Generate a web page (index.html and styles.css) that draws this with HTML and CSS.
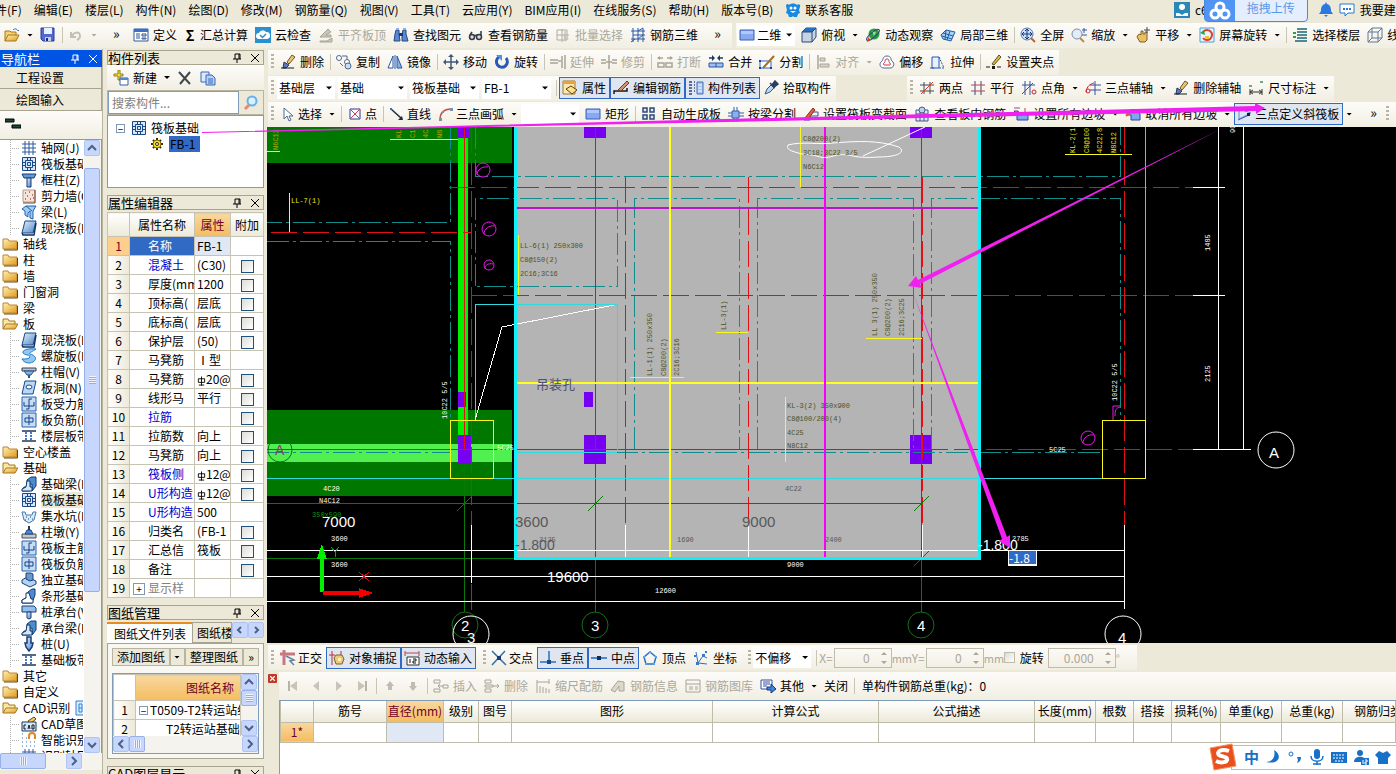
FILE: index.html
```html
<!DOCTYPE html>
<html lang="zh-CN">
<head>
    <meta charset="UTF-8">
    <meta name="viewport" content="width=device-width, initial-scale=1.0">
    <title>绘图输入 - 筏板基础</title>
    <link rel="stylesheet" href="styles.css">
</head>
<body>
    <!-- Icon sprite -->
    <svg class="sprite" aria-hidden="true">
        <defs>
            <linearGradient id="gFolder" x1="0" y1="0" x2="1" y2="1"><stop offset="0" stop-color="#fff3b8"/><stop offset="1" stop-color="#e0981c"/></linearGradient>
            <linearGradient id="gBlue" x1="0" y1="0" x2="1" y2="1"><stop offset="0" stop-color="#e4f2ff"/><stop offset="1" stop-color="#4a80d8"/></linearGradient>
            <linearGradient id="gSlab" x1="0" y1="0" x2="1" y2="1"><stop offset="0" stop-color="#e4f0fc"/><stop offset="1" stop-color="#5088c8"/></linearGradient>
        </defs>
        <symbol id="open" viewBox="0 0 16 16"><path d="M1 14V4h5l1 1h5v3" fill="#f4d070" stroke="#a87818"/><path d="M1 14l3-6h11l-3 6z" fill="url(#gFolder)" stroke="#a87818"/><path d="M9 3c2-2 4-1 5 1l1-1" fill="none" stroke="#3a6ab0"/></symbol>
        <symbol id="save" viewBox="0 0 16 16"><path d="M1 1h13v13H3l-2-2z" fill="#5068d0" stroke="#283c98"/><path d="M4 1h8v6H4z" fill="#e8f0ff"/><path d="M5 10h6v4H5z" fill="#c8d0e8"/><path d="M6 11h2v3H6z" fill="#182878"/></symbol>
        <symbol id="undo" viewBox="0 0 16 16"><path d="M3 5v5h5M4 9c2-4 8-5 8 0 0 2-1 3-3 4" fill="none" stroke="#c4c0b4" stroke-width="2"/></symbol>
        <symbol id="define" viewBox="0 0 16 16"><path d="M1 2h14v12H1z" fill="#fff" stroke="#3058a0"/><path d="M1 2h14v3H1z" fill="#3c70c8"/><path d="M3 7h4M3 9h4M3 11h4" stroke="#3058a0"/><path d="M9 7h4v2H9zM9 11h4v1H9z" fill="#f4e8c0" stroke="#3058a0"/></symbol>
        <symbol id="cloud" viewBox="0 0 16 16"><path d="M0 0h16v16H0z" fill="#2a90d0"/><path d="M4 12a3 3 0 0 1 0-6 4 4 0 0 1 7-1 3.500 3.500 0 0 1 1 7z" fill="#fff"/><path d="M5 8l2.500 2.500L11 7" fill="none" stroke="#2a90d0" stroke-width="1.500"/></symbol>
        <symbol id="level" viewBox="0 0 16 16"><path d="M2 15h12v-4l-5 3H2zM2 10l8-8 3 3-5 3h5v2H2z" fill="#c8c4b8" stroke="#a8a498"/></symbol>
        <symbol id="find" viewBox="0 0 16 16"><path d="M3 3h3v4l1 7H1l1-7zM10 3h3v4l2 7H9V7z" fill="#5c88d0" stroke="#284888"/><path d="M6 6h4v3H6z" fill="#183878"/><path d="M3 1h3v2H3zM10 1h3v2h-3z" fill="#88b0e8"/></symbol>
        <symbol id="glasses" viewBox="0 0 16 16"><circle cx="4" cy="10" r="2.500" fill="#d8dce0" stroke="#303840" stroke-width="1.500"/><circle cx="11" cy="10" r="2.500" fill="#d8dce0" stroke="#303840" stroke-width="1.500"/><path d="M6 9l3-1M2 8l2-3M13 8V4" stroke="#303840" stroke-width="1.500"/></symbol>
        <symbol id="batch" viewBox="0 0 16 16"><path d="M2 3h10v10H2zM2 8h12M7 2v13M10 4v10" fill="none" stroke="#b0aca0"/><path d="M8 7l6 5-3 1-1 2z" fill="#c8c4b8"/></symbol>
        <symbol id="rebar3d" viewBox="0 0 16 16"><path d="M3 1v14M8 1v14M13 1v14M1 4h14M1 12h14M1 15l4-3M3 8h12M8 4l5-3M8 12l5-4" fill="none" stroke="#2858a8"/></symbol>
        <symbol id="rect" viewBox="0 0 16 16"><path d="M1 3h14v10H1z" fill="#88a8f0" stroke="#3860b8"/><path d="M2 4h12v3H2z" fill="#b0c8ff"/></symbol>
        <symbol id="cube" viewBox="0 0 16 16"><path d="M1 5l4-4h10v9l-4 5H1z" fill="#c4d4e4" stroke="#284878"/><path d="M1 5l4-4h10l-4 4z" fill="#2a70c0"/><path d="M1 5h10v10M11 5l4-4" fill="none" stroke="#284878"/></symbol>
        <symbol id="orbit" viewBox="0 0 16 16"><circle cx="9" cy="7" r="5.500" fill="#28a040"/><path d="M7 4l4 1-2 4z" fill="#a0e090"/><ellipse cx="8" cy="8" rx="8" ry="2.500" transform="rotate(-40 8 8)" fill="none" stroke="#284878"/><path d="M2 15l1-5 3 3z" fill="#d04020"/></symbol>
        <symbol id="local3d" viewBox="0 0 16 16"><path d="M1 8l5-5 9 2-4 9-8-2z" fill="#a8d0f0" stroke="#1c60a8"/><path d="M6 3l-1 10M10 4L7 13M3 6l10 3M2 9l10 3" stroke="#1c60a8"/></symbol>
        <symbol id="full" viewBox="0 0 16 16"><circle cx="7" cy="7" r="6" fill="#c8e0ff" stroke="#6078a0"/><path d="M7 2v10M2 7h10M5 4l2-2 2 2M5 10l2 2 2-2M4 5L2 7l2 2M10 5l2 2-2 2" fill="none" stroke="#183878"/><path d="M11 11l4 4" stroke="#b06830" stroke-width="2"/></symbol>
        <symbol id="zoomio" viewBox="0 0 16 16"><circle cx="6" cy="7" r="5" fill="#e0ecf8" stroke="#8090a8"/><path d="M9 11l4 4" stroke="#c08848" stroke-width="2"/><path d="M13 1v5M11 3h5M11 8h5" stroke="#3058a0"/></symbol>
        <symbol id="pan" viewBox="0 0 16 16"><path d="M3 8l2-1 1 1V4h2v3h2V5h2v8l-2 2H5l-3-5z" fill="#e8c068" stroke="#806020"/><path d="M12 0v6M9 3h6" stroke="#404858"/></symbol>
        <symbol id="rotscr" viewBox="0 0 16 16"><path d="M1 1h14v14H1z" fill="#e8f4ff" stroke="#40a0d8"/><path d="M4 5a5 5 0 1 1 0 6" fill="none" stroke="#e04030" stroke-width="2"/><path d="M5 3L1 6l5 2z" fill="#30a040"/><path d="M6 9h4v3H6z" fill="#f0c040"/></symbol>
        <symbol id="floors" viewBox="0 0 16 16"><path d="M5 2h10M5 5h10M5 8h10M5 11h10M3 14h12" stroke="#186878" stroke-width="1.500"/><path d="M1 6h3M1 10h3" stroke="#30a040" stroke-width="2"/></symbol>
        <symbol id="wire" viewBox="0 0 16 16"><path d="M1 5h10v10H1zM5 1h10v10H5zM1 5l4-4M11 5l4-4M11 15l4-4M1 15l4-4" fill="none" stroke="#607898"/></symbol>
        <symbol id="brush" viewBox="0 0 16 16"><path d="M7 8l5-7 3 2-6 7z" fill="#e8c878" stroke="#705020"/><path d="M4 8l5 3-3 3H3z" fill="#5878c0" stroke="#283860"/><path d="M1 14h13" stroke="#181818"/></symbol>
        <symbol id="copy" viewBox="0 0 16 16"><circle cx="3" cy="4" r="2.500" fill="#fff" stroke="#506890"/><circle cx="11" cy="8" r="2.500" fill="#fff" stroke="#506890"/><circle cx="12" cy="12" r="3" fill="#c8dcf8" stroke="#506890"/><path d="M6 2h5v3M4 9l3 3" fill="none" stroke="#506890"/></symbol>
        <symbol id="mirror" viewBox="0 0 16 16"><path d="M6 2v12H1z" fill="#fff" stroke="#2858a8"/><path d="M10 2v12h5z" fill="#88b0e8" stroke="#2858a8"/><path d="M8 1v14" stroke="#2858a8"/></symbol>
        <symbol id="move" viewBox="0 0 16 16"><path d="M8 2v12M2 8h12" stroke="#405878" stroke-width="1.500"/><path d="M8 0l3 3H5zM8 16l3-3H5zM0 8l3-3v6zM16 8l-3-3v6z" fill="#405878"/></symbol>
        <symbol id="rotate" viewBox="0 0 16 16"><path d="M5 3a5.500 5.500 0 1 0 7 1" fill="none" stroke="#2858b8" stroke-width="3"/><path d="M2 1h6v6z" fill="#5090e8"/></symbol>
        <symbol id="extend" viewBox="0 0 16 16"><path d="M0 6h8M0 9h8M8 7h3M12 2v12M15 1v14" stroke="#a8a498" stroke-width="1.500"/></symbol>
        <symbol id="trim" viewBox="0 0 16 16"><path d="M0 6h5M0 9h5M11 6h5M11 9h5M8 1v14M5 8h6" stroke="#a8a498" stroke-width="1.500"/></symbol>
        <symbol id="break" viewBox="0 0 16 16"><path d="M1 4h5M10 4h5M1 9h6v4H1zM9 9h6v4H9z" fill="none" stroke="#a8a498" stroke-width="1.500"/><path d="M3 2L0 4l3 2zM13 2l3 2-3 2z" fill="#a8a498"/></symbol>
        <symbol id="merge" viewBox="0 0 16 16"><path d="M1 4h5M10 4h5" stroke="#203860" stroke-width="1.500"/><path d="M4 1l3 3-3 3zM12 1L9 4l3 3z" fill="#203860"/><path d="M1 9h14v4H1zM8 9v4" fill="#a0c0f0" stroke="#2858a8"/></symbol>
        <symbol id="split" viewBox="0 0 16 16"><path d="M1 7h11v7H1z" fill="#fff" stroke="#3060c8"/><path d="M4 14L15 2" stroke="#a07020" stroke-width="2"/><path d="M0 6h2v2H0zM0 13h2v2H0zM11 13h2v2h-2z" fill="#1840a0"/></symbol>
        <symbol id="align" viewBox="0 0 16 16"><path d="M3 1v14" stroke="#a8a498" stroke-width="1.500"/><path d="M5 4h5v3H5zM5 10h9v3H5z" fill="#d8d4c8" stroke="#a8a498"/></symbol>
        <symbol id="offset" viewBox="0 0 16 16"><path d="M8 2c5 0 3 4 6 6 2 3 0 6-3 6H5c-4 0-5-4-3-6 3-2 1-6 6-6z" fill="#fff" stroke="#506890"/><path d="M8 5c3 0 1 3 3 4 1 2 0 2-1 2H6c-2 0-2-1-1-2 2-1 0-4 3-4z" fill="none" stroke="#d03040"/></symbol>
        <symbol id="stretch" viewBox="0 0 16 16"><path d="M2 3h7v11H2z" fill="#e8f0fc" stroke="#2858a8"/><path d="M9 3l5 11H9" fill="none" stroke="#2858a8" stroke-dasharray="2 1"/><path d="M0 14h4" stroke="#2858a8"/></symbol>
        <symbol id="grip" viewBox="0 0 16 16"><path d="M6 10l7-9 2 2-7 8z" fill="#d8b848" stroke="#605020"/><path d="M0 13h4M11 13h4" stroke="#181818"/><path d="M6 12h3v3H6z" fill="#181818"/></symbol>
        <symbol id="props" viewBox="0 0 16 16"><path d="M1 1h12v13H1z" fill="#f8e8b8" stroke="#a07828"/><path d="M1 1h12v3H1z" fill="#f0a030"/><path d="M4 9l5-3 6 4-5 4z" fill="#ffe088" stroke="#604010"/></symbol>
        <symbol id="editbar" viewBox="0 0 16 16"><path d="M1 14v-3h13v-3" fill="none" stroke="#181818" stroke-width="1.500"/><path d="M5 10l9-9 2 2-8 8z" fill="#d89068" stroke="#604028"/></symbol>
        <symbol id="list" viewBox="0 0 16 16"><path d="M1 2h3M1 5h3M1 8h3M1 11h3M1 14h3M6 2h1M6 5h1M6 8h1M6 11h1" stroke="#304878" stroke-width="1.500"/><path d="M9 2h6v12H9z" fill="#a8c4f0" stroke="#4870b8"/><path d="M10 5h4M10 8h4M10 11h4" stroke="#fff"/></symbol>
        <symbol id="pick" viewBox="0 0 16 16"><path d="M2 14l2-5 4-4 3 3-4 4z" fill="#b8d8f8" stroke="#305880"/><path d="M7 3l5 5M9 5l3-4 3 3-4 3z" fill="#284060" stroke="#284060" stroke-width="1.500"/></symbol>
        <symbol id="axis2" viewBox="0 0 16 16"><path d="M5 2v12M11 2v12M1 5h14M1 11h14" stroke="#404858"/><path d="M2 14L14 2" stroke="#d04020"/></symbol>
        <symbol id="axisp" viewBox="0 0 16 16"><path d="M5 1v14M11 1v14" stroke="#384878"/><path d="M1 5h14M1 11h14" stroke="#c04050"/></symbol>
        <symbol id="axisa" viewBox="0 0 16 16"><path d="M4 1v14M9 1v14M1 5h13" stroke="#3850a0"/><path d="M1 14L12 3" stroke="#d02030"/><circle cx="13" cy="12" r="2" fill="none" stroke="#d02030"/></symbol>
        <symbol id="axisc" viewBox="0 0 16 16"><path d="M10 1v14M5 5h11M5 10h11" stroke="#3850a0"/><path d="M1 12c1-6 4-8 8-9" fill="none" stroke="#d02030"/><circle cx="3" cy="11" r="2" fill="none" stroke="#d02030"/></symbol>
        <symbol id="dim" viewBox="0 0 16 16"><path d="M2 9v6M14 9v6M2 12h12M5 10l-3 2 3 2M11 10l3 2-3 2" fill="none" stroke="#303030"/><path d="M1 5h3v2H1zM12 1h3v2h-3z" fill="#70a880"/></symbol>
        <symbol id="select" viewBox="0 0 16 16"><path d="M4 2v11l3-3 2 5 2-1-2-4h4z" fill="#fff" stroke="#506890"/></symbol>
        <symbol id="point" viewBox="0 0 16 16"><path d="M3 3h10v10H3z" fill="#fff" stroke="#283890"/><path d="M4 4l8 8M12 4l-8 8" stroke="#d04050"/></symbol>
        <symbol id="line" viewBox="0 0 16 16"><path d="M2 3l10 9" stroke="#202840" stroke-width="1.500"/><path d="M14 14H9l4-4z" fill="#202840"/><path d="M1 2h2v2H1z" fill="#3070d0"/></symbol>
        <symbol id="arc" viewBox="0 0 16 16"><path d="M2 14C2 7 6 3 13 3" fill="none" stroke="#d05048" stroke-width="1.500"/><path d="M12 2h3v3h-3zM1 12h3v3H1zM4 5h2v2H4z" fill="#8090a8"/></symbol>
        <symbol id="auto" viewBox="0 0 16 16"><path d="M2 2h4v4H2zM9 2h4v4H9zM2 9h4v4H2zM9 9h4v4H9z" fill="#dce8fc" stroke="#304878" stroke-width="1.500"/></symbol>
        <symbol id="bybeam" viewBox="0 0 16 16"><path d="M0 7h16M0 10h16M6 1v4M9 1v4M6 12v4M9 12v4" stroke="#3060b0"/><path d="M4 5h7v7H4z" fill="#88b0f0" stroke="#3060b0"/></symbol>
        <symbol id="section" viewBox="0 0 16 16"><path d="M1 14h6v-4h8V6H9" fill="none" stroke="#3850a0"/><path d="M2 12l8-10 2 2-7 9z" fill="#e06048" stroke="#902818"/></symbol>
        <symbol id="view" viewBox="0 0 16 16"><path d="M2 4h12v11H2zM2 8h12M6 4v11M10 4v11" fill="#e0e8f8" stroke="#405890"/><circle cx="8" cy="4" r="3" fill="#b8d0f0" stroke="#506080"/></symbol>
        <symbol id="slope" viewBox="0 0 16 16"><path d="M1 5h4l2 3h8v6H4V8z" fill="#80a8f0" stroke="#2848a0"/><path d="M1 2h6M12 2v4" stroke="#c04050"/></symbol>
        <symbol id="unslope" viewBox="0 0 16 16"><path d="M5 4h7l3 4v6H6V9H1z" fill="#80a8f0" stroke="#2848a0"/><path d="M1 10l4-4" stroke="#e06020" stroke-width="2"/></symbol>
        <symbol id="tri" viewBox="0 0 16 16"><path d="M2 13V3l12 4z" fill="#d8e4fc" stroke="#7088c8"/><path d="M1 14l11-5" stroke="#3060c0"/><path d="M10 7h3v3h-3z" fill="#182040"/></symbol>
        <symbol id="new" viewBox="0 0 16 16"><path d="M5 0h2v4h3v2H7v4H5V6H1V4h4z" fill="#f8d840" stroke="#908020"/><path d="M7 8h8v7H7z" fill="#fff" stroke="#3060b0"/><path d="M7 8h8v2H7z" fill="#5088d8"/></symbol>
        <symbol id="cross" viewBox="0 0 16 16"><path d="M2 2l11 12M13 2L3 14" stroke="#404850" stroke-width="2"/></symbol>
        <symbol id="docs" viewBox="0 0 16 16"><path d="M1 2h8v10H1z" fill="#dce8fc" stroke="#3868b8"/><path d="M6 5h6l3 3v7H6z" fill="#b8d0f8" stroke="#3868b8"/><path d="M8 9h5M8 11h5M8 13h5" stroke="#3868b8"/></symbol>
        <symbol id="search" viewBox="0 0 16 16"><circle cx="9" cy="6" r="4.500" fill="#d8f0ff" stroke="#68b0e8" stroke-width="2"/><path d="M6 10l-4 4" stroke="#e88870" stroke-width="3"/></symbol>
        <symbol id="gear" viewBox="0 0 16 16"><path d="M8 2v12M2 8h12M4 4l8 8M12 4l-8 8" stroke="#302800" stroke-width="2"/><circle cx="8" cy="8" r="4" fill="#f8e020" stroke="#806c00"/><circle cx="8" cy="8" r="1.500" fill="#fff" stroke="#302800"/></symbol>
        <symbol id="folder" viewBox="0 0 16 16"><path d="M1 13V3h5l1 2h8v8z" fill="url(#gFolder)" stroke="#b88830"/><path d="M2 14h13.500V6" fill="none" stroke="#604410"/></symbol>
        <symbol id="folderopen" viewBox="0 0 16 16"><path d="M1 13V3h5l1 2h6v3" fill="#f8e8a8" stroke="#a87820"/><path d="M1 13l3-5h12l-3 5z" fill="url(#gFolder)" stroke="#a87820"/></symbol>
        <symbol id="axis" viewBox="0 0 16 16"><path d="M4 1v14M8 1v14M12 1v14M1 4h14M1 8h14M1 12h14" stroke="#2a5ca0"/></symbol>
        <symbol id="raft" viewBox="0 0 16 16"><path d="M1.500 1.500h13v13h-13zM4.500 4.500h7v7h-7z" fill="#d8e8fc" stroke="#184888"/><path d="M6.500 1v3M9.500 1v3M6.500 12v3M9.500 12v3M1 6.500h3M1 9.500h3M12 6.500h3M12 9.500h3M6.500 6.500h3v3h-3z" fill="none" stroke="#184888"/></symbol>
        <symbol id="column" viewBox="0 0 16 16"><path d="M1 2h14l-2 4H3z" fill="#6098d8" stroke="#183c70"/><path d="M6 6h4v9H6z" fill="url(#gBlue)" stroke="#183c70"/></symbol>
        <symbol id="wall" viewBox="0 0 16 16"><path d="M2 2h12v12H2z" fill="#f4e4dc" stroke="#b89888"/><path d="M4 5h1M8 4h1M6 8h1M11 7h1M4 11h1M9 11h1M12 10h1" stroke="#c04828" stroke-width="1.500"/><path d="M14 2v13H2" fill="none" stroke="#684838"/></symbol>
        <symbol id="beam" viewBox="0 0 16 16"><path d="M1 5l4-3h10l-3 5v8l-3-1V7L7 9v4l-3-2V7z" fill="#a0ccf4" stroke="#2060a8"/><path d="M5 2l6 5" stroke="#2060a8"/></symbol>
        <symbol id="slab" viewBox="0 0 16 16"><path d="M4 1h11l-3 12H1z" fill="url(#gSlab)" stroke="#184888"/><path d="M1 13l1 2h11l2-12" fill="none" stroke="#103060" stroke-width="1.500"/></symbol>
        <symbol id="spiral" viewBox="0 0 16 16"><path d="M15 1C7 0 1 2 2 5c1 2 8 2 7 4-1 2-4 2-8 2 2 4 7 5 11 3 5-3 2-7-3-8-2-1 2-2 6-5z" fill="#90c8f4" stroke="#2878c0"/></symbol>
        <symbol id="cap" viewBox="0 0 16 16"><path d="M1 4h14v3H1z" fill="#b8c4d0" stroke="#304058"/><path d="M3 7h10l-3 4H6z" fill="#80b0e8" stroke="#305080"/><path d="M7 11h2v3H7z" fill="#305080"/></symbol>
        <symbol id="hole" viewBox="0 0 16 16"><path d="M4 1h11l-3 13H1z" fill="#b8d8f8" stroke="#184888"/><ellipse cx="8" cy="7" rx="3" ry="2" fill="#fff" stroke="#184888"/></symbol>
        <symbol id="barmain" viewBox="0 0 16 16"><path d="M1 1h14v14H1z" fill="#c4dcf8" stroke="#2860a8"/><path d="M3 6v4h10V6M8 3v10M8 3h3M8 13H5" fill="none" stroke="#184080"/></symbol>
        <symbol id="barneg" viewBox="0 0 16 16"><path d="M1 1h14v14H1z" fill="#c4dcf8" stroke="#2860a8"/><path d="M4 6h8M4 6v4M12 6v4M4 10h8M8 3v10" fill="none" stroke="#184080"/></symbol>
        <symbol id="strip" viewBox="0 0 16 16"><path d="M1 3h14M1 13h14" stroke="#203858" stroke-width="1.500"/><path d="M5 4v9M10 4v9" stroke="#4878c0" stroke-width="2" stroke-dasharray="2 1"/></symbol>
        <symbol id="fbeam" viewBox="0 0 16 16"><path d="M6 4l4-3h5v9l-4 5V8H9v7H1l2-4h3z" fill="#4c8cd0" stroke="#143868"/><path d="M6 5h3v6h2v4H1v-2l4-2z" fill="#d0e8fc" stroke="#143868"/></symbol>
        <symbol id="pit" viewBox="0 0 16 16"><path d="M1 4h3l1 3h6l1-3h3l-2 8-5 3-5-3z" fill="#d8ecfc" stroke="#4878a8"/><path d="M5 9h1M9 9h1M7 11h1M4 12h1M11 11h1" stroke="#184888"/></symbol>
        <symbol id="pier" viewBox="0 0 16 16"><path d="M1 10h14v4H1z" fill="#c4c8cc" stroke="#484c58"/><path d="M4 10l2-4h4l2 4z" fill="#4888d8" stroke="#204880"/><path d="M7 2h2v4H7z" fill="#303848"/></symbol>
        <symbol id="iso" viewBox="0 0 16 16"><path d="M1 8l5-3 9 4v3l-6 3-8-4z" fill="#b0d4f4" stroke="#204070"/><path d="M5 1h5l2 1v6l-3 1-4-2z" fill="#6898d0" stroke="#204070"/></symbol>
        <symbol id="footing" viewBox="0 0 16 16"><path d="M1 15v-3l4-2 2-6 4-3h3v6l-3 8z" fill="#4c8cd0" stroke="#143868"/><path d="M1 15v-3l4-2V5h3l2 6h2v4z" fill="#fff" stroke="#143868"/></symbol>
        <symbol id="pilecap" viewBox="0 0 16 16"><path d="M1 2h12l2 2v4H1z" fill="#90c0f0" stroke="#184070"/><path d="M6 8h4v6l-2 1-2-1z" fill="url(#gBlue)" stroke="#184070"/></symbol>
        <symbol id="pile" viewBox="0 0 16 16"><path d="M6 1h4v6h2l-1 4-3 4-3-4-1-4h2z" fill="url(#gBlue)" stroke="#183c70" stroke-width="1.500"/></symbol>
        <symbol id="cad" viewBox="0 0 16 16"><path d="M7 5l6-4 2 2-6 5z" fill="#f0d060" stroke="#604010"/><path d="M1 6h14v9H1z" fill="#d8e8f8" stroke="#183860"/><path d="M5 9H3v4h2M7 13l1-4 1 4M11 9v4h2V9z" fill="none" stroke="#101828"/></symbol>
        <symbol id="smart" viewBox="0 0 16 16"><path d="M1 2h1M1 6h1M5 6h1M1 10h1M5 10h1M9 10h1M13 10h1M1 14h1M5 14h1M9 14h1M13 14h1" stroke="#3868b0"/><path d="M8 7V4a3 3 0 0 1 6 0v3" fill="none" stroke="#e08828" stroke-width="2"/></symbol>
        <symbol id="grid2" viewBox="0 0 16 16"><path d="M1 1h14v14H1z" fill="#d8ecff" stroke="#3080d0"/><path d="M4 4h3v8H4zM9 4h3v8H9zM4 8h3M9 8h3" fill="none" stroke="#3080d0"/></symbol>
        <symbol id="ortho" viewBox="0 0 16 16"><path d="M4 0v15M0 4h15" stroke="#c87880" stroke-width="3"/><path d="M6 6l8 4-4 1 4 4" fill="none" stroke="#6080a0" stroke-width="1.500"/></symbol>
        <symbol id="snap" viewBox="0 0 16 16"><path d="M3 1v14M0 5h6M12 1v6" stroke="#b03040"/><path d="M5 8l2-3h6l2 4-2 5H7z" fill="#f0c878" stroke="#806020"/><path d="M9 8h3v3H9z" fill="#fff8c0"/></symbol>
        <symbol id="dyn" viewBox="0 0 16 16"><path d="M1 1v5M15 1v5M1 3h14" stroke="#c04050"/><path d="M3 7h12v8H3z" fill="#fff" stroke="#303030"/><path d="M6 9v4M9 9h3v2H9v2h3" fill="none" stroke="#101010"/></symbol>
        <symbol id="isect" viewBox="0 0 16 16"><path d="M1 1l14 14M14 1L1 15" stroke="#3070b0" stroke-width="1.500"/><path d="M6 6h4v4H6z" fill="#183c70"/></symbol>
        <symbol id="perp" viewBox="0 0 16 16"><path d="M9 1v11M0 12h16" stroke="#2870c0" stroke-width="1.500"/><path d="M7 10h4v4H7z" fill="#184888"/></symbol>
        <symbol id="mid" viewBox="0 0 16 16"><path d="M0 8h16" stroke="#4888d8" stroke-width="2"/><path d="M6 6h4v4H6z" fill="#102c58"/></symbol>
        <symbol id="vertex" viewBox="0 0 16 16"><path d="M8 2l6 5-2 7H4L2 7z" fill="none" stroke="#2870c0" stroke-width="1.500"/><path d="M7 1h2v2H7zM1 6h2v2H1zM13 6h2v2h-2zM3 13h2v2H3zM11 13h2v2h-2z" fill="#58a0e8"/></symbol>
        <symbol id="coord" viewBox="0 0 16 16"><path d="M3 2l2 11 9 1M5 13l5-7 4 2" fill="none" stroke="#2870c0"/><path d="M9 4h3v3H9zM1 5h2v2H1zM12 1h2v2h-2zM3 12h3v3H3z" fill="#3878c8"/></symbol>
        <symbol id="first" viewBox="0 0 16 16"><path d="M4 3v10" stroke="#b8b4a8" stroke-width="2"/><path d="M12 3v10L5 8z" fill="#c8c4b8"/></symbol>
        <symbol id="prev" viewBox="0 0 16 16"><path d="M11 3v10L5 8z" fill="#c8c4b8"/></symbol>
        <symbol id="next" viewBox="0 0 16 16"><path d="M5 3v10l6-5z" fill="#c8c4b8"/></symbol>
        <symbol id="last" viewBox="0 0 16 16"><path d="M4 3v10l7-5z" fill="#c8c4b8"/><path d="M12 3v10" stroke="#b8b4a8" stroke-width="2"/></symbol>
        <symbol id="up" viewBox="0 0 16 16"><path d="M8 3l4 5h-2v4H6V8H4z" fill="#c0bcb0"/></symbol>
        <symbol id="down" viewBox="0 0 16 16"><path d="M8 13l4-5h-2V4H6v4H4z" fill="#c0bcb0"/></symbol>
        <symbol id="insert" viewBox="0 0 16 16"><path d="M1 2h6v3H1zM1 11h6v3H1zM10 7h5v3h-5zM5 8h5M7 6L5 8l2 2" fill="none" stroke="#a8a498"/></symbol>
        <symbol id="remove" viewBox="0 0 16 16"><path d="M1 2h6v3H1zM1 11h6v3H1zM1 7h8v2H1zM9 8h6M13 6l2 2-2 2" fill="none" stroke="#a8a498"/></symbol>
        <symbol id="scale" viewBox="0 0 16 16"><path d="M2 2v13M2 4h12M14 1v5M5 8v7M8 9v6M11 10v5M14 11v4" stroke="#a8a498"/></symbol>
        <symbol id="info" viewBox="0 0 16 16"><path d="M1 12l7-9 6 1v9H9V8l-4 6z" fill="#dcd8cc" stroke="#a8a498"/></symbol>
        <symbol id="lib" viewBox="0 0 16 16"><path d="M1 2h14v12H1zM1 6h14M4 9h4M4 11h4M10 9h3M10 11h3" fill="none" stroke="#a8a498"/></symbol>
        <symbol id="other" viewBox="0 0 16 16"><path d="M1 2h11v9H1z" fill="#fff" stroke="#3050a0"/><path d="M3 4h7M3 6h7M3 8h4" stroke="#3050a0"/><path d="M7 9h4V6l5 5-5 4v-3H7z" fill="#4080e0" stroke="#183878"/></symbol>
        <symbol id="pin" viewBox="0 0 12 12"><path d="M4 2h5v5M4 2v5M2 7h8M6 7v4M8 2v5" fill="none" stroke="currentColor"/></symbol>
        <symbol id="close" viewBox="0 0 12 12"><path d="M2 2l8 8M10 2l-8 8" stroke="currentColor"/></symbol>
        <symbol id="steel" viewBox="0 0 10 12"><path d="M1.500 3.500h7v4h-7zM5 1v10M2 10.500h6" fill="none" stroke="#000"/></symbol>
        <symbol id="chatbot" viewBox="0 0 16 16"><path d="M1 4c0-2 2-3 3-1 2-2 6-2 8 0 2-2 4 0 3 2l-1 3 1 3-2 1-1 3H9l-1-1-1 1H4l-1-3-2-1 1-3z" fill="#1888e0"/><circle cx="6" cy="6" r="1.500" fill="#fff"/><circle cx="10" cy="6" r="1.500" fill="#fff"/><path d="M5 9h6l-3 2z" fill="#fff"/></symbol>
    </svg>

    <!-- Menu -->
    <header class="menubar">
        <nav class="menu">
            <a href="#">文件(F)</a><a href="#">编辑(E)</a><a href="#">楼层(L)</a><a href="#">构件(N)</a><a href="#">绘图(D)</a><a href="#">修改(M)</a><a href="#">钢筋量(Q)</a><a href="#">视图(V)</a><a href="#">工具(T)</a><a href="#">云应用(Y)</a><a href="#">BIM应用(I)</a><a href="#">在线服务(S)</a><a href="#">帮助(H)</a><a href="#">版本号(B)</a><a href="#"><svg class="ic"><use href="#chatbot"/></svg>联系客服</a>
        </nav>
        <div class="account">
            <svg class="ic" viewBox="0 0 16 16"><path d="M0 0h16v16H0z" fill="#2a88b8"/><circle cx="8" cy="5" r="3" fill="#fff"/><path d="M2 14v-3h3l3 2 3-2h3v3z" fill="#fff"/></svg>
            <span>c6</span>
            <button class="upload">
                <span class="upload-logo"><svg viewBox="0 0 22 20"><g fill="none" stroke="#fff" stroke-width="3"><circle cx="11" cy="6" r="4"/><circle cx="6" cy="13" r="4"/><circle cx="16" cy="13" r="4"/></g></svg></span>
                <span class="upload-text">拖拽上传</span>
            </button>
            <svg class="ic bell" viewBox="0 0 16 16"><path d="M8 0l1 2c4 1 4 5 4 7l2 3H1l2-3c0-2 0-6 4-7zM6 13h4l-2 2z" fill="#2a78e0"/></svg>
            <svg class="ic" viewBox="0 0 16 16"><path d="M1 2h14v9H9l-3 3v-3H1z" fill="#fff" stroke="#2878c8"/><path d="M4 7h2M7 7h2M10 7h2" stroke="#2878c8" stroke-width="2"/></svg>
            <a href="#">我要建议</a>
        </div>
    </header>

    <div class="toolbar main-bar">
        <div class="strip">
            <button title="打开"><svg class="ic"><use href="#open"/></svg></button><i class="dd"></i>
            <button title="保存"><svg class="ic"><use href="#save"/></svg></button><i class="sep"></i>
            <button title="撤销" disabled><svg class="ic"><use href="#undo"/></svg></button><i class="dd off"></i>
            <span class="more">»</span>
            <button><svg class="ic"><use href="#define"/></svg>定义</button>
            <button><b class="sigma">Σ</b>汇总计算</button>
            <button><svg class="ic"><use href="#cloud"/></svg>云检查</button>
            <button disabled><svg class="ic"><use href="#level"/></svg>平齐板顶</button>
            <button><svg class="ic"><use href="#find"/></svg>查找图元</button>
            <button><svg class="ic"><use href="#glasses"/></svg>查看钢筋量</button>
            <button disabled><svg class="ic"><use href="#batch"/></svg>批量选择</button>
            <button><svg class="ic"><use href="#rebar3d"/></svg>钢筋三维</button>
            <span class="more">»</span>
        </div>
        <div class="strip wide">
            <label class="combo w60"><svg class="ic"><use href="#rect"/></svg><select aria-label="视图"><option>二维</option></select></label>
            <button><svg class="ic"><use href="#cube"/></svg>俯视</button><i class="dd"></i>
            <button><svg class="ic"><use href="#orbit"/></svg>动态观察</button>
            <button><svg class="ic"><use href="#local3d"/></svg>局部三维</button><i class="sep"></i>
            <button><svg class="ic"><use href="#full"/></svg>全屏</button>
            <button><svg class="ic"><use href="#zoomio"/></svg>缩放</button><i class="dd"></i>
            <button><svg class="ic"><use href="#pan"/></svg>平移</button><i class="dd"></i>
            <button><svg class="ic"><use href="#rotscr"/></svg>屏幕旋转</button><i class="dd"></i><i class="sep"></i>
            <button><svg class="ic"><use href="#floors"/></svg>选择楼层</button>
            <button><svg class="ic"><use href="#wire"/></svg>线框</button>
        </div>
    </div>

    <div class="workspace">
        <!-- Navigation -->
        <aside class="nav">
            <h2 class="title active">导航栏<span class="grow"></span><svg class="tool"><use href="#pin"/></svg><svg class="tool"><use href="#close"/></svg></h2>
            <button class="nav-tab">工程设置</button>
            <button class="nav-tab">绘图输入</button>
            <div class="nav-tools"><svg class="ic" viewBox="0 0 16 16"><path d="M0 3h9v3H0zM7 9h9v3H7z" fill="#184838" stroke="#000"/></svg></div>
            <div class="nav-body">
                <ul class="tree">
                    <li class="leaf"><svg class="ic"><use href="#axis"/></svg>轴网(J)</li>
                    <li class="leaf"><svg class="ic"><use href="#raft"/></svg>筏板基础</li>
                    <li class="leaf"><svg class="ic"><use href="#column"/></svg>框柱(Z)</li>
                    <li class="leaf"><svg class="ic"><use href="#wall"/></svg>剪力墙(Q)</li>
                    <li class="leaf"><svg class="ic"><use href="#beam"/></svg>梁(L)</li>
                    <li class="leaf"><svg class="ic"><use href="#slab"/></svg>现浇板(B)</li>
                    <li><svg class="ic"><use href="#folder"/></svg>轴线</li>
                    <li><svg class="ic"><use href="#folder"/></svg>柱</li>
                    <li><svg class="ic"><use href="#folder"/></svg>墙</li>
                    <li><svg class="ic"><use href="#folder"/></svg>门窗洞</li>
                    <li><svg class="ic"><use href="#folder"/></svg>梁</li>
                    <li><svg class="ic"><use href="#folderopen"/></svg>板</li>
                    <li class="leaf"><svg class="ic"><use href="#slab"/></svg>现浇板(B)</li>
                    <li class="leaf"><svg class="ic"><use href="#spiral"/></svg>螺旋板(B)</li>
                    <li class="leaf"><svg class="ic"><use href="#cap"/></svg>柱帽(V)</li>
                    <li class="leaf"><svg class="ic"><use href="#hole"/></svg>板洞(N)</li>
                    <li class="leaf"><svg class="ic"><use href="#barmain"/></svg>板受力筋</li>
                    <li class="leaf"><svg class="ic"><use href="#barneg"/></svg>板负筋(F)</li>
                    <li class="leaf"><svg class="ic"><use href="#strip"/></svg>楼层板带</li>
                    <li><svg class="ic"><use href="#folder"/></svg>空心楼盖</li>
                    <li><svg class="ic"><use href="#folderopen"/></svg>基础</li>
                    <li class="leaf"><svg class="ic"><use href="#fbeam"/></svg>基础梁(F)</li>
                    <li class="leaf"><svg class="ic"><use href="#raft"/></svg><span class="current">筏板基础</span></li>
                    <li class="leaf"><svg class="ic"><use href="#pit"/></svg>集水坑(K)</li>
                    <li class="leaf"><svg class="ic"><use href="#pier"/></svg>柱墩(Y)</li>
                    <li class="leaf"><svg class="ic"><use href="#barmain"/></svg>筏板主筋</li>
                    <li class="leaf"><svg class="ic"><use href="#barneg"/></svg>筏板负筋</li>
                    <li class="leaf"><svg class="ic"><use href="#iso"/></svg>独立基础</li>
                    <li class="leaf"><svg class="ic"><use href="#footing"/></svg>条形基础</li>
                    <li class="leaf"><svg class="ic"><use href="#pilecap"/></svg>桩承台(V)</li>
                    <li class="leaf"><svg class="ic"><use href="#fbeam"/></svg>承台梁(F)</li>
                    <li class="leaf"><svg class="ic"><use href="#pile"/></svg>桩(U)</li>
                    <li class="leaf"><svg class="ic"><use href="#strip"/></svg>基础板带</li>
                    <li><svg class="ic"><use href="#folder"/></svg>其它</li>
                    <li><svg class="ic"><use href="#folder"/></svg>自定义</li>
                    <li><svg class="ic"><use href="#folderopen"/></svg>CAD识别<svg class="ic"><use href="#grid2"/></svg></li>
                    <li class="leaf"><svg class="ic"><use href="#cad"/></svg>CAD草图</li>
                    <li class="leaf"><svg class="ic"><use href="#smart"/></svg>智能识别</li>
                    <li class="leaf"><svg class="ic"><use href="#axis"/></svg>识别轴网</li>
                </ul>
                <div class="vscroll">
                    <button class="sb" aria-label="向上"><svg viewBox="0 0 10 10"><path d="M1 7l4-4 4 4"/></svg></button>
                    <div class="thumb nav-thumb"><span class="ridges"></span></div>
                    <span class="grow"></span>
                    <button class="sb" aria-label="向下"><svg viewBox="0 0 10 10"><path d="M1 3l4 4 4-4"/></svg></button>
                </div>
            </div>
            <div class="hscroll">
                <div class="thumb nav-hthumb"><span class="ridges side"></span></div>
                <span class="grow"></span>
                <button class="sb" aria-label="向右"><svg viewBox="0 0 10 10"><path d="M3 1l4 4-4 4"/></svg></button>
            </div>
        </aside>

        <!-- Component list, properties, drawings -->
        <aside class="docks">
            <section class="dock">
                <h2 class="title">构件列表<span class="grow"></span><svg class="tool"><use href="#pin"/></svg><svg class="tool"><use href="#close"/></svg></h2>
                <div class="strip dock-tools">
                    <button><svg class="ic"><use href="#new"/></svg>新建</button><i class="dd"></i>
                    <button title="删除"><svg class="ic"><use href="#cross"/></svg></button>
                    <button title="复制"><svg class="ic"><use href="#docs"/></svg></button>
                </div>
                <div class="search">
                    <input type="text" placeholder="搜索构件..." aria-label="搜索构件">
                    <button title="搜索"><svg class="ic"><use href="#search"/></svg></button>
                </div>
                <ul class="parts">
                    <li><span class="fold">−</span><svg class="ic"><use href="#raft"/></svg>筏板基础</li>
                    <li class="child"><svg class="ic"><use href="#gear"/></svg><span class="picked">FB-1</span></li>
                </ul>
            </section>

            <section class="dock">
                <h2 class="title">属性编辑器<span class="grow"></span><svg class="tool"><use href="#pin"/></svg><svg class="tool"><use href="#close"/></svg></h2>
                <table class="props">
                    <colgroup><col class="c-no"><col class="c-name"><col class="c-val"><col></colgroup>
                    <thead><tr><th></th><th>属性名称</th><th class="hot">属性</th><th>附加</th></tr></thead>
                    <tbody>
                        <tr class="on"><th>1</th><td>名称</td><td>FB-1</td><td></td></tr>
                        <tr class="blue"><th>2</th><td>混凝土</td><td>(C30)</td><td><input type="checkbox" aria-label="混凝土"></td></tr>
                        <tr><th>3</th><td>厚度(mm</td><td>1200</td><td><input type="checkbox" aria-label="厚度"></td></tr>
                        <tr><th>4</th><td>顶标高(</td><td>层底</td><td><input type="checkbox" aria-label="顶标高"></td></tr>
                        <tr><th>5</th><td>底标高(</td><td>层底</td><td><input type="checkbox" aria-label="底标高"></td></tr>
                        <tr><th>6</th><td>保护层</td><td>(50)</td><td><input type="checkbox" aria-label="保护层"></td></tr>
                        <tr><th>7</th><td>马凳筋</td><td>Ⅰ型</td><td></td></tr>
                        <tr><th>8</th><td>马凳筋</td><td><svg class="steel"><use href="#steel"/></svg>20@</td><td><input type="checkbox" aria-label="马凳筋"></td></tr>
                        <tr><th>9</th><td>线形马</td><td>平行</td><td><input type="checkbox" aria-label="线形马"></td></tr>
                        <tr class="blue"><th>10</th><td>拉筋</td><td></td><td><input type="checkbox" aria-label="拉筋"></td></tr>
                        <tr><th>11</th><td>拉筋数</td><td>向上</td><td><input type="checkbox" aria-label="拉筋数"></td></tr>
                        <tr><th>12</th><td>马凳筋</td><td>向上</td><td><input type="checkbox" aria-label="马凳筋数"></td></tr>
                        <tr class="blue"><th>13</th><td>筏板侧</td><td><svg class="steel"><use href="#steel"/></svg>12@</td><td><input type="checkbox" aria-label="筏板侧"></td></tr>
                        <tr class="blue"><th>14</th><td>U形构造</td><td><svg class="steel"><use href="#steel"/></svg>12@</td><td><input type="checkbox" aria-label="U形构造"></td></tr>
                        <tr class="blue"><th>15</th><td>U形构造</td><td>500</td><td></td></tr>
                        <tr><th>16</th><td>归类名</td><td>(FB-1</td><td><input type="checkbox" aria-label="归类名"></td></tr>
                        <tr><th>17</th><td>汇总信</td><td>筏板</td><td><input type="checkbox" aria-label="汇总信"></td></tr>
                        <tr><th>18</th><td>备注</td><td></td><td><input type="checkbox" aria-label="备注"></td></tr>
                        <tr class="group"><th>19</th><td><span class="fold">+</span>显示样</td><td></td><td></td></tr>
                    </tbody>
                </table>
            </section>

            <section class="dock">
                <h2 class="title">图纸管理<span class="grow"></span><svg class="tool"><use href="#pin"/></svg><svg class="tool"><use href="#close"/></svg></h2>
                <div class="tabs">
                    <button class="tab selected">图纸文件列表</button><button class="tab">图纸楼层</button>
                    <button class="sb" aria-label="左"><svg viewBox="0 0 10 10"><path d="M6 2L3 5l3 3"/></svg></button><button class="sb" aria-label="右"><svg viewBox="0 0 10 10"><path d="M4 2l3 3-3 3"/></svg></button>
                </div>
                <div class="sheets">
                    <div class="sheet-tools"><button class="raised">添加图纸</button><button class="raised drop" aria-label="更多"><i class="dd"></i></button><button class="raised">整理图纸</button><span class="grow"></span><span class="raised">»</span></div>
                    <div class="sheet-box">
                        <div class="sheet-main">
                            <table class="sheet-table">
                                <colgroup><col class="c-no"><col></colgroup>
                                <thead><tr><th></th><th class="hot">图纸名称</th></tr></thead>
                                <tbody><tr><th>1</th><td><span class="fold">−</span>T0509-T2转运站结构</td></tr><tr><th>2</th><td class="sub">T2转运站基础平面</td></tr></tbody>
                            </table>
                            <div class="vscroll">
                                <button class="sb" aria-label="向上"><svg viewBox="0 0 10 10"><path d="M1 7l4-4 4 4"/></svg></button>
                                <div class="thumb"><span class="ridges"></span></div>
                                <span class="grow"></span>
                                <button class="sb" aria-label="向下"><svg viewBox="0 0 10 10"><path d="M1 3l4 4 4-4"/></svg></button>
                            </div>
                        </div>
                        <div class="hscroll">
                            <button class="sb" aria-label="向左"><svg viewBox="0 0 10 10"><path d="M7 1L3 5l4 4"/></svg></button>
                            <div class="thumb"><span class="ridges side"></span></div>
                            <span class="grow"></span>
                            <button class="sb" aria-label="向右"><svg viewBox="0 0 10 10"><path d="M3 1l4 4-4 4"/></svg></button>
                        </div>
                    </div>
                </div>
            </section>

            <section class="dock">
                <h2 class="title">CAD图层显示<span class="grow"></span><svg class="tool"><use href="#pin"/></svg><svg class="tool"><use href="#close"/></svg></h2>
            </section>
        </aside>

        <!-- Drawing area -->
        <main class="stage">
            <div class="toolbar">
                <div class="strip">
                    <i class="grip"></i>
                    <button><svg class="ic"><use href="#brush"/></svg>删除</button><i class="sep"></i>
                    <button><svg class="ic"><use href="#copy"/></svg>复制</button>
                    <button><svg class="ic"><use href="#mirror"/></svg>镜像</button><i class="sep"></i>
                    <button><svg class="ic"><use href="#move"/></svg>移动</button>
                    <button><svg class="ic"><use href="#rotate"/></svg>旋转</button><i class="sep"></i>
                    <button disabled><svg class="ic"><use href="#extend"/></svg>延伸</button>
                    <button disabled><svg class="ic"><use href="#trim"/></svg>修剪</button><i class="sep"></i>
                    <button disabled><svg class="ic"><use href="#break"/></svg>打断</button>
                    <button><svg class="ic"><use href="#merge"/></svg>合并</button>
                    <button><svg class="ic"><use href="#split"/></svg>分割</button><i class="sep"></i>
                    <button disabled><svg class="ic"><use href="#align"/></svg>对齐</button><i class="dd off"></i>
                    <button><svg class="ic"><use href="#offset"/></svg>偏移</button>
                    <button><svg class="ic"><use href="#stretch"/></svg>拉伸</button><i class="sep"></i>
                    <button><svg class="ic"><use href="#grip"/></svg>设置夹点</button>
                </div>
            </div>
            <div class="toolbar">
                <div class="strip">
                    <i class="grip"></i>
                    <label class="combo w60"><select aria-label="楼层"><option>基础层</option></select></label>
                    <label class="combo w70"><select aria-label="构件类型"><option>基础</option></select></label>
                    <label class="combo w70"><select aria-label="构件"><option>筏板基础</option></select></label>
                    <label class="combo w70"><select aria-label="名称"><option>FB-1</option></select></label><i class="sep"></i>
                    <button class="pressed"><svg class="ic"><use href="#props"/></svg>属性</button>
                    <button class="pressed"><svg class="ic"><use href="#editbar"/></svg>编辑钢筋</button>
                    <button class="pressed"><svg class="ic"><use href="#list"/></svg>构件列表</button>
                    <button><svg class="ic"><use href="#pick"/></svg>拾取构件</button>
                </div>
                <div class="strip apart">
                    <i class="grip"></i>
                    <button><svg class="ic"><use href="#axis2"/></svg>两点</button>
                    <button><svg class="ic"><use href="#axisp"/></svg>平行</button>
                    <button><svg class="ic"><use href="#axisa"/></svg>点角</button><i class="dd"></i>
                    <button><svg class="ic"><use href="#axisc"/></svg>三点辅轴</button><i class="dd"></i>
                    <button><svg class="ic"><use href="#brush"/></svg>删除辅轴</button>
                    <button><svg class="ic"><use href="#dim"/></svg>尺寸标注</button><i class="dd"></i>
                </div>
            </div>
            <div class="toolbar">
                <div class="strip wide">
                    <i class="grip"></i>
                    <button class="tight"><svg class="ic"><use href="#select"/></svg>选择</button><i class="dd"></i><i class="sep"></i>
                    <button class="tight"><svg class="ic"><use href="#point"/></svg>点</button><i class="sep"></i>
                    <button class="tight"><svg class="ic"><use href="#line"/></svg>直线</button>
                    <button class="tight"><svg class="ic"><use href="#arc"/></svg>三点画弧</button><i class="dd"></i>
                    <label class="combo w60"><select aria-label="半径"><option></option></select></label>
                    <button><svg class="ic"><use href="#rect"/></svg>矩形</button><i class="sep"></i>
                    <button><svg class="ic"><use href="#auto"/></svg>自动生成板</button>
                    <button><svg class="ic"><use href="#bybeam"/></svg>按梁分割</button>
                    <button><svg class="ic"><use href="#section"/></svg>设置筏板变截面</button>
                    <button><svg class="ic"><use href="#view"/></svg>查看板内钢筋</button>
                    <button><svg class="ic"><use href="#slope"/></svg>设置所有边坡</button><i class="dd"></i>
                    <button><svg class="ic"><use href="#unslope"/></svg>取消所有边坡</button><i class="dd"></i>
                    <button class="pressed tight"><svg class="ic"><use href="#tri"/></svg>三点定义斜筏板</button><i class="dd"></i>
                    <span class="more">»</span>
                    <i class="grip"></i>
                </div>
            </div>

            <div class="canvas">
                <svg class="drawing" shape-rendering="crispEdges">
                    <g transform="translate(-267 -127)" fill="none">
                        <!-- beams -->
                        <path d="M267 127h245v36H267zM267 410h245v86H267z" fill="#007800"/>
                        <path d="M267 444h245v18H267z" fill="#50f050"/>
                        <path d="M458 127h10v310h-10z" fill="#00f000"/>
                        <!-- slab -->
                        <path d="M515 127h465v431H515z" fill="#b4b4b4"/>
                        <path d="M458 127h11v11h-11zM584 127h22v11h-22zM910 127h22v11h-22zM458 392h8v15h-8zM584 392h9v15h-9zM458 435h13v29h-13zM584 435h22v29h-22zM910 435h22v29h-22z" fill="#7800f0"/>
                        <!-- wall edges -->
                        <g stroke="#108c8c" stroke-dasharray="22 4 3 4">
                            <path d="M450.500 127v95.500H267M267 241.500h183.500V420M475.500 127v49.500H1120.500V127"/>
                            <path d="M475.500 286V198.500H617.500V286.500H475"/>
                            <path d="M634.500 449V198.500H739.500V449M757.500 449V198.500H913.500V449M931.500 449V198.500H1120.500V420M267 452.500h184M517 452.500h585"/>
                        </g>
                        <g stroke="#e01018" stroke-dasharray="26 6">
                            <path d="M449 187.500h744M271 232.500h200M471 295.500h722M922 449.500h271M471.500 127v398M625.500 177v348M748.500 177v348M922.500 177v348M1124.500 127v398M471.500 584v28"/>
                        </g>
                        <path d="M464.500 127v322M595.500 127v322M921.500 127v322M267 449.500h655" stroke="#e01018"/>
                        <path d="M464.500 464v148M595.500 464v148M921.500 450v162M267 503.500h654M267 558.500h248" stroke="#087808"/>
                        <path d="M457 511l15-15M588 511l15-15M914 511l15-15M914 566l15-15" stroke="#087808"/>
                        <path d="M475.500 420V304.500H617.500V452M517 452.500h100M267 478.500h879M1145.500 127v351" stroke="#30d8e0"/>
                        <path d="M517 208h461" stroke="#b418c8" stroke-width="2"/>
                        <path d="M517 383h461M670 127v430" stroke="#ffff20" stroke-width="2"/>
                        <path d="M825 127v430" stroke="#f800f8" stroke-width="2"/>
                        <path d="M475 420l27-93 112-22" stroke="#fff"/>
                        <path d="M450.500 420.500h43v58h-43zM1102.500 420.500h43v58h-43z" stroke="#f8f820"/>
                        <path d="M289.500 193v39M267 151.500h13M390 139.500h68M518.500 235v60M800.500 127v60M785.500 397v65M716 332.500h32M866 338.500h56M630 377.500h54M1065 154.500h67" stroke="#f8f820"/>
                        <!-- dimension lines -->
                        <path d="M267 550.500h857M267 576.500h857M267 601.500h857M471.500 525v58M625.500 525v32M748.500 525v32M922.500 525v32M1124.500 525v84M1218.500 127v322M1243.500 127v322M1193 187.500h32M1193 295.500h32M1193 449.500h58" stroke="#fff"/>
                        <path d="M515.500 127v431.500H979.500V127" stroke="#10f0f8" stroke-width="3"/>
                        <g shape-rendering="auto">
                            <path d="M788 145c15-4 30 0 45-2 25-2 45-3 66 4 8 6-4 10-20 10-30 2-25-4-42-2-20 6-12 0-35-1-12-3-16-5-14-9M863 156l62-29" stroke="#fff"/>
                            <g stroke="#e818e8"><circle cx="483" cy="170" r="7"/><path d="M477 175c0-5 5-9 11-8"/><circle cx="489" cy="229" r="7"/><path d="M484 234c0-5 5-9 11-8"/><circle cx="489" cy="265" r="5"/><path d="M485 269c0-4 3-6 8-5"/><circle cx="1088" cy="438" r="7"/><path d="M1083 443c0-5 5-9 11-8M1113 420v-14h7M1115 416c0-6 1-8 5-9"/></g>
                            <g stroke="#107018"><circle cx="280" cy="450" r="12"/><circle cx="465" cy="625" r="13"/><circle cx="595" cy="625" r="13"/><circle cx="921" cy="625" r="13"/></g>
                            <g stroke="#fff"><circle cx="471" cy="634" r="18"/><circle cx="1123" cy="634" r="18"/><circle cx="1276" cy="450" r="18"/></g>
                        </g>
                        <path d="M320 592h4v-33h3l-5-15-5 15h3z" fill="#00f000"/>
                        <path d="M323 591h36v-3l14 5-14 5v-3h-36z" fill="#f00000"/>
                        <path d="M359 572l10 9M369 572l-10 9" stroke="#e01018"/>
                        <path d="M331 547l4 5 4-5M335 552v5" stroke="#10a018"/>
                    </g>
                    <g transform="translate(-267 -127)" class="cad-text">
                        <g class="note">
                            <text x="520" y="248">LL-6(1) 250x300</text><text x="520" y="262">C8@150(2)</text><text x="520" y="276">2C16;3C16</text>
                            <text x="803" y="141">C8@200(2)</text><text x="803" y="155">3C18;3C22 3/5</text><text x="803" y="169">N6C12</text>
                            <text x="787" y="408">KL-3(2) 350x900</text><text x="787" y="421">C8@100/200(4)</text><text x="787" y="435">4C25</text><text x="787" y="448">N8C12</text>
                            <text transform="translate(652 376) rotate(-90)">LL-1(1) 250x350</text><text transform="translate(666 376) rotate(-90)">C8@200(2)</text><text transform="translate(679 376) rotate(-90)">2C16;3C16</text>
                            <text transform="translate(726 330) rotate(-90)">LL-3(1)</text>
                            <text transform="translate(877 336) rotate(-90)">LL 3(1) 250x350</text><text transform="translate(890 336) rotate(-90)">C8@200(2)</text><text transform="translate(904 336) rotate(-90)">2C16;3C25</text>
                        </g>
                        <g class="lime">
                            <text x="291" y="203">LL-7(1)</text>
                            <text transform="translate(1075 153) rotate(-90)">KL-2(1)</text><text transform="translate(1089 153) rotate(-90)">C8@100</text><text transform="translate(1102 153) rotate(-90)">4C22;8</text><text transform="translate(1116 153) rotate(-90)">N8C12</text>
                        </g>
                        <g class="gold">
                            <text transform="translate(278 150) rotate(-90)">N6C12</text><text transform="translate(401 138) rotate(-90)">KL</text><text transform="translate(415 138) rotate(-90)">C1</text><text transform="translate(428 138) rotate(-90)">4C</text><text transform="translate(442 138) rotate(-90)">N8</text>
                        </g>
                        <g class="pale">
                            <text x="323" y="491">4C20</text><text x="319" y="503">N4C12</text><text x="331" y="541">3600</text><text x="331" y="567">3600</text><text x="787" y="567">9000</text><text x="655" y="593">12600</text><text x="1012" y="541">2785</text><text x="1049" y="452">5C25</text><text x="497" y="450">5C25</text>
                            <text transform="translate(447 419) rotate(-90)">10C22 5/5</text><text transform="translate(1117 401) rotate(-90)">10C22 5/5</text><text transform="translate(1210 251) rotate(-90)">1485</text><text transform="translate(1210 382) rotate(-90)">2125</text><text transform="translate(1235 133) rotate(-90)">90</text>
                        </g>
                        <g class="dim"><text x="785" y="491">4C22</text><text x="539" y="542">2125</text><text x="677" y="542">1690</text><text x="825" y="542">2400</text></g>
                        <text class="green" x="312" y="517">350x590</text>
                        <text class="big" x="322" y="527">7000</text><text class="big" x="547" y="582">19600</text>
                        <text class="big gray" x="515" y="527">3600</text><text class="big gray" x="742" y="527">9000</text>
                        <text class="mid gray" x="515" y="550">-1.800</text><text class="mid" x="978" y="550">-1.800</text>
                        <text class="cjk" x="536" y="389">吊装孔</text>
                        <text class="big" x="461" y="631">2</text><text class="big" x="467" y="643">3</text><text class="big" x="591" y="631">3</text><text class="big" x="917" y="631">4</text><text class="big" x="1118" y="643">4</text><text class="big" x="1269" y="458">A</text><text class="mid violet" x="275" y="455">A</text>
                    </g>
                </svg>
                <input class="height-input" type="text" value="-1.8" aria-label="标高">
            </div>

            <!-- Snap options -->
            <div class="toolbar snap-bar">
                <div class="strip">
                    <i class="grip"></i>
                    <button class="tight"><svg class="ic"><use href="#ortho"/></svg>正交</button>
                    <button class="pressed"><svg class="ic"><use href="#snap"/></svg>对象捕捉</button>
                    <button class="pressed"><svg class="ic"><use href="#dyn"/></svg>动态输入</button>
                    <i class="grip spaced"></i>
                    <button class="tight"><svg class="ic"><use href="#isect"/></svg>交点</button>
                    <button class="pressed"><svg class="ic"><use href="#perp"/></svg>垂点</button>
                    <button class="pressed"><svg class="ic"><use href="#mid"/></svg>中点</button>
                    <button><svg class="ic"><use href="#vertex"/></svg>顶点</button>
                    <button><svg class="ic"><use href="#coord"/></svg>坐标</button>
                    <i class="grip spaced"></i>
                    <label class="combo w60"><select aria-label="偏移方式"><option>不偏移</option></select></label><i class="sep"></i>
                    <label class="field off" for="offx">X=</label><span class="spin"><input id="offx" type="text" value="0" disabled><svg viewBox="0 0 8 16"><path d="M1 5l3-3 3 3zM1 11l3 3 3-3z"/></svg></span><span class="unit">mm</span>
                    <label class="field off" for="offy">Y=</label><span class="spin"><input id="offy" type="text" value="0" disabled><svg viewBox="0 0 8 16"><path d="M1 5l3-3 3 3zM1 11l3 3 3-3z"/></svg></span><span class="unit">mm</span>
                    <input type="checkbox" id="rot" class="off"><label class="field" for="rot">旋转</label><span class="spin long"><input type="text" value="0.000" disabled aria-label="角度"><svg viewBox="0 0 8 16"><path d="M1 5l3-3 3 3zM1 11l3 3 3-3z"/></svg></span><span class="unit">°</span>
                </div>
            </div>

            <!-- Rebar table -->
            <section class="rebar">
                <div class="rebar-side"><button class="shut" aria-label="关闭"><svg viewBox="0 0 8 8"><path d="M2 2l4 4M6 2L2 6"/></svg></button></div>
                <div class="rebar-main">
                    <div class="strip wide">
                        <button disabled title="首条"><svg class="ic"><use href="#first"/></svg></button>
                        <button disabled title="上一条"><svg class="ic"><use href="#prev"/></svg></button>
                        <button disabled title="下一条"><svg class="ic"><use href="#next"/></svg></button>
                        <button disabled title="末条"><svg class="ic"><use href="#last"/></svg></button><i class="sep"></i>
                        <button disabled title="上移"><svg class="ic"><use href="#up"/></svg></button>
                        <button disabled title="下移"><svg class="ic"><use href="#down"/></svg></button><i class="sep"></i>
                        <button disabled><svg class="ic"><use href="#insert"/></svg>插入</button>
                        <button disabled><svg class="ic"><use href="#remove"/></svg>删除</button>
                        <button disabled><svg class="ic"><use href="#scale"/></svg>缩尺配筋</button>
                        <button disabled><svg class="ic"><use href="#info"/></svg>钢筋信息</button>
                        <button disabled><svg class="ic"><use href="#lib"/></svg>钢筋图库</button>
                        <button><svg class="ic"><use href="#other"/></svg>其他</button><i class="dd"></i>
                        <button>关闭</button><i class="sep"></i>
                        <span class="total">单构件钢筋总重(kg)：0</span>
                    </div>
                    <div class="rebar-scroll">
                        <table class="rebar-table">
                            <colgroup><col class="r33"><col class="r73"><col class="r57"><col class="r35"><col class="r33"><col class="r201"><col class="r166"><col class="r156"><col class="r61"><col class="r38"><col class="r38"><col class="r49"><col class="r61"><col class="r61"><col></colgroup>
                            <thead><tr><th></th><th>筋号</th><th class="hot">直径(mm)</th><th>级别</th><th>图号</th><th>图形</th><th>计算公式</th><th>公式描述</th><th>长度(mm)</th><th>根数</th><th>搭接</th><th>损耗(%)</th><th>单重(kg)</th><th>总重(kg)</th><th>钢筋归类</th></tr></thead>
                            <tbody><tr><th class="hot">1*</th><td></td><td class="cell"></td><td></td><td></td><td></td><td></td><td></td><td></td><td></td><td></td><td></td><td></td><td></td><td></td></tr></tbody>
                        </table>
                    </div>
                </div>
            </section>
        </main>
    </div>

    <!-- Callout arrows -->
    <svg class="callouts" fill="#f020f0">
        <path d="M202 132l1053-26v-3l10 5-9 6v-3L202 133z"/>
        <path d="M1225 127L918 280l-2-4-8 10 14 2-2-4z"/>
        <path d="M912 290l90 249-3 2 11 7v-13l-3 2z"/>
    </svg>

    <!-- Input method bar -->
    <div class="ime">
        <svg class="ime-logo" viewBox="0 0 28 28"><path d="M1 5l22-4 4 22-22 4z" fill="#e85020" stroke="#f89060"/><path d="M20 8c-8-3-13 1-10 4 2 2 9 1 8 5-1 3-7 3-11 1" fill="none" stroke="#fff" stroke-width="4"/></svg>
        <div class="ime-bar">
            <b>中</b>
            <svg class="ic" viewBox="0 0 16 16"><path d="M9 1c9 5 5 15-8 12 6 0 10-5 8-12z"/></svg>
            <svg class="ic" viewBox="0 0 16 16"><circle cx="4" cy="5" r="2" fill="none" stroke="#1870c8"/><path d="M10 8h4c0 3-1 5-4 6l1-3z"/></svg>
            <svg class="ic" viewBox="0 0 16 16"><rect x="5" y="0" width="6" height="10" rx="3"/><path d="M2 7c0 7 12 7 12 0M8 12v4M4 15h8" fill="none" stroke="#1870c8" stroke-width="1.500"/></svg>
            <svg class="ic" viewBox="0 0 16 16"><path d="M0 3h16v11H0z"/><path d="M2 6h12M2 9h12M4 12h8" stroke="#fff" stroke-dasharray="2 1"/></svg>
            <svg class="ic" viewBox="0 0 16 16"><circle cx="7" cy="4" r="3"/><path d="M1 13c0-7 12-7 12 0zM8 9h8v7H8z"/><path d="M10 11v4M12 11h2v2h-2v2h2" fill="none" stroke="#fff"/></svg>
            <svg class="ic" viewBox="0 0 16 16"><path d="M4 2l4 2 4-2 4 4-3 3v6H3V9L0 6z"/></svg>
        </div>
    </div>
</body>
</html>
```
FILE: styles.css
```css
* {
    box-sizing: border-box;
}
html, body {
    height: 100%;
    margin: 0;
    overflow: hidden;
}
body {
    display: flex;
    flex-direction: column;
    position: relative;
    background: #ece9d8;
    color: #000;
    font: 12px/16px "Noto Sans CJK SC", sans-serif;
    white-space: nowrap;
}
button, input, select {
    margin: 0;
    padding: 0;
    border: 0;
    background: none;
    color: inherit;
    font: inherit;
}
ul {
    margin: 0;
    padding: 0;
    list-style: none;
}
table {
    border-collapse: collapse;
    table-layout: fixed;
    width: 100%;
}
a {
    color: inherit;
    text-decoration: none;
}
th {
    font-weight: normal;
}
.sprite {
    position: absolute;
    width: 0;
    height: 0;
}
.ic {
    width: 16px;
    height: 16px;
    flex: none;
}
.grow {
    flex: 1;
}

/* menu */
.menubar {
    display: flex;
    justify-content: space-between;
    height: 21px;
    flex: none;
}
.menu {
    display: flex;
    align-items: center;
    margin-left: -23px;
    height: 19px;
}
.menu a {
    display: flex;
    align-items: center;
    gap: 4px;
    padding: 0 6px;
}
.account {
    display: flex;
    align-items: center;
    gap: 5px;
    width: 222px;
    height: 19px;
    flex: none;
}
.upload {
    display: flex;
    width: 104px;
    height: 24px;
    margin-left: -9px;
    flex: none;
    border: 1px solid #4a88e8;
    border-radius: 0 0 4px 4px;
    background: #e4eefc;
    z-index: 1;
}
.upload-logo {
    width: 30px;
    height: 22px;
    padding: 2px 4px;
    background: #5094f4;
}
.upload-logo svg {
    display: block;
    width: 22px;
    height: 20px;
}
.upload-text {
    flex: 1;
    line-height: 18px;
    color: #5c98e8;
}
.bell {
    margin-left: 5px;
}

/* toolbars */
.toolbar {
    display: flex;
    align-items: center;
    height: 26px;
    flex: none;
}
.main-bar {
    height: 28px;
}
.strip {
    display: flex;
    align-items: center;
    height: 25px;
    flex: none;
    padding: 0 1px;
    background: linear-gradient(#fdfcf9, #f1eee2);
}
.wide {
    flex: 1 0 auto;
}
.apart {
    margin-left: 71px;
}
.stage .toolbar {
    padding-left: 1px;
}
.strip button {
    display: flex;
    align-items: center;
    gap: 4px;
    height: 22px;
    padding: 0 3px 0 2px;
    border: 1px solid transparent;
}
.strip .tight {
    gap: 2px;
}
.strip button:disabled {
    color: #aca899;
}
.strip .pressed {
    border-color: #316ac5;
    background: #dfe6f0;
}
.sigma {
    width: 12px;
    font-size: 14px;
}
.more {
    width: 28px;
    padding-left: 14px;
    height: 20px;
    font-size: 14px;
}
.main-bar .more {
    padding-left: 12px;
    width: 29px;
}
.main-bar .wide {
    margin-left: 4px;
}
.sep {
    width: 1px;
    height: 16px;
    margin: 0 2px;
    background: #c9c5b4;
}
.dd {
    width: 13px;
    height: 3px;
    background: #000;
    clip-path: polygon(3px 0, 9px 0, 6px 3px);
}
.dd.off {
    background: #aca899;
}
.grip {
    width: 3px;
    height: 16px;
    margin: 0 3px 0 2px;
    background: repeating-linear-gradient(#b8b4a4 0 2px, transparent 2px 4px);
}
.grip.spaced {
    margin-left: 7px;
    margin-right: 2px;
}
.combo {
    display: grid;
    grid-template-columns: auto 1fr 11px;
    align-items: center;
    height: 21px;
    margin-right: 3px;
    padding-left: 2px;
    background: #fff;
}
.combo .ic {
    margin-right: 2px;
}
.combo select {
    grid-column: 2 / 4;
    grid-row: 1;
    width: 100%;
    height: 20px;
    appearance: none;
    outline: none;
}
.combo::after {
    content: "";
    grid-column: 3;
    grid-row: 1;
    height: 21px;
    background: #000;
    clip-path: polygon(2px 9px, 8px 9px, 5px 12px);
    pointer-events: none;
}
.w60 {
    width: 58px;
}
.w70 {
    width: 69px;
}

/* docks */
.workspace {
    display: flex;
    flex: 1;
    min-height: 0;
}
.title {
    display: flex;
    align-items: center;
    gap: 6px;
    height: 15px;
    margin: 0;
    padding-right: 2px;
    border: 1px solid #a8a490;
    font-size: 13px;
    font-weight: normal;
    line-height: 14px;
}
.title.active {
    height: 17px;
    border-color: #0054e3;
    background: #0054e3;
    color: #fff;
}
.tool {
    width: 12px;
    height: 12px;
    flex: none;
}
.nav {
    display: flex;
    flex-direction: column;
    width: 103px;
    flex: none;
    padding-top: 1px;
    border-right: 1px solid #b8b4a0;
}
.nav-tab {
    height: 22px;
    padding-left: 16px;
    border-bottom: 1px solid #a8a490;
    border-right: 1px solid #a8a490;
    text-align: left;
    flex: none;
}
.nav-tools {
    height: 28px;
    padding: 5px;
    flex: none;
    background: linear-gradient(#fdfcf9, #f1eee2);
}
.nav-body {
    display: flex;
    flex: 1;
    min-height: 0;
    border-top: 1px solid #7f9db9;
    border-right: 1px solid #7f9db9;
    background: #fff;
}
.tree {
    flex: 1;
    min-width: 0;
    margin-right: 1px;
    overflow: hidden;
}
.tree li {
    display: flex;
    align-items: center;
    gap: 5px;
    height: 16px;
    padding-left: 2px;
}
.tree .leaf {
    gap: 4px;
    padding-left: 21px;
    background: repeating-linear-gradient(#b0b0b0 0 1px, transparent 1px 2px) 10px 0 / 1px 16px no-repeat, repeating-linear-gradient(90deg, #b0b0b0 0 1px, transparent 1px 2px) 10px 8px / 10px 1px no-repeat;
}
.current {
    background: #ece9d8;
}
.vscroll {
    display: flex;
    flex-direction: column;
    width: 17px;
    flex: none;
    background: #f4f3ee;
}
.hscroll {
    display: flex;
    height: 17px;
    flex: none;
    background: #f4f3ee;
}
.sb {
    display: grid;
    place-items: center;
    width: 16px;
    height: 16px;
    flex: none;
    border: 1px solid #b0c4f4;
    border-radius: 2px;
    background: #c6d6fc;
}
.sb svg {
    width: 10px;
    height: 10px;
    fill: none;
    stroke: #4a6184;
    stroke-width: 2;
}
.thumb {
    display: grid;
    place-items: center;
    width: 16px;
    height: 16px;
    flex: none;
    border: 1px solid #98b0e8;
    border-radius: 2px;
    background: #c6d6fc;
}
.nav-thumb {
    height: 424px;
    margin-top: 12px;
}
.nav-hthumb {
    width: 46px;
}
.nav .hscroll {
    margin-bottom: 4px;
    padding-right: 20px;
}
.ridges {
    width: 7px;
    height: 8px;
    background: repeating-linear-gradient(#f0f4fe 0 1px, #8cb0f8 1px 2px);
}
.ridges.side {
    background: repeating-linear-gradient(90deg, #f0f4fe 0 1px, #8cb0f8 1px 2px);
}
.docks {
    width: 157px;
    flex: none;
    margin: 0 3px 0 4px;
    padding-top: 1px;
    overflow: hidden;
}
.dock {
    margin-bottom: 7px;
}
.dock-tools {
    padding-left: 3px;
}
.search {
    display: flex;
    height: 25px;
    border: 1px solid #b8b4a0;
}
.search input {
    flex: 1;
    min-width: 0;
    padding-left: 3px;
    border: 1px solid #7f9db9;
    background: #fff;
}
.search input::placeholder {
    color: #808080;
}
.search button {
    padding: 3px 4px 0;
}
.parts {
    min-height: 73px;
    padding-top: 4px;
    border: 1px solid #7f9db9;
    background: #fff;
}
.parts li {
    display: flex;
    align-items: center;
    gap: 4px;
    height: 16px;
    padding-left: 8px;
}
.parts .child {
    padding-left: 41px;
}
.picked {
    padding: 0 5px 0 1px;
    background: #316ac5;
}
.fold {
    display: inline-block;
    width: 9px;
    height: 9px;
    margin-right: 2px;
    border: 1px solid #8098b0;
    background: #fff;
    color: #000;
    font-size: 10px;
    line-height: 7px;
    text-align: center;
}
.props {
    border: 1px solid #7f9db9;
    background: #fff;
    margin-top: 2px;
}
.props th, .props td, .sheet-table th, .sheet-table td {
    height: 19px;
    padding: 0;
    border: 1px solid #c8c4b4;
    overflow: hidden;
    line-height: 16px;
    text-align: left;
}
.props td:nth-child(n+3) {
    padding-left: 2px;
}
.props td:nth-child(2) {
    padding-left: 18px;
}
.props td:last-child {
    padding: 0;
    text-align: center;
}
.props tbody th, .sheet-table tbody th {
    background: linear-gradient(90deg, #fff, #ece9d8);
    text-align: center;
}
.props thead th {
    height: 24px;
    background: linear-gradient(#fff, #ece9d8);
    text-align: center;
}
.props .hot, .sheet-table .hot, .rebar-table .hot {
    background: linear-gradient(#f8d8a0, #f4bc60);
    color: #700028;
}
.props .on th {
    background: #fcd08c;
    color: #700028;
}
.props .on td:nth-child(2) {
    background: #316ac5;
    color: #fff;
}
.props .on td:nth-child(3) {
    background: #dfe8f4;
}
.blue td:nth-child(2) {
    color: #0000d0;
}
.props .group td {
    padding-left: 3px;
    color: #808080;
}
.props .group .fold {
    width: 12px;
    height: 12px;
    line-height: 10px;
    margin-right: 3px;
}
.c-no {
    width: 22px;
}
.c-name {
    width: 65px;
}
.c-val {
    width: 36px;
}
input[type="checkbox"] {
    width: 13px;
    height: 13px;
    appearance: none;
    border: 1px solid #1c5180;
    background: linear-gradient(135deg, #dcdcd7, #fff);
    vertical-align: middle;
}
.steel {
    width: 9px;
    height: 12px;
    vertical-align: middle;
}
.tabs {
    display: flex;
    height: 21px;
    margin-top: 2px;
    overflow: hidden;
}
.tab {
    height: 21px;
    padding: 0 4px;
    flex: 1;
    min-width: 0;
    overflow: hidden;
    border: 1px solid #a8a490;
    text-align: left;
}
.tab.selected {
    flex: none;
    padding: 0 6px 0 7px;
    border: 0;
    border-top: 2px solid #e88c20;
    background: #fcfcfa;
}
.sheets {
    padding: 4px;
    border: 1px solid #a8a490;
    background: #f8f7f2;
}
.sheet-tools {
    display: flex;
    padding-bottom: 3px;
}
.raised {
    height: 18px;
    padding: 0 4px;
    border: 1px solid #b8b4a0;
    background: #ece9d8;
}
.raised.drop {
    display: flex;
    align-items: center;
    padding: 0;
}
.sheet-box {
    margin-top: 4px;
    border: 1px solid #7f9db9;
}
.sheet-main {
    display: flex;
    height: 62px;
    overflow: hidden;
}
.sheet-table {
    flex: 1;
    min-width: 0;
    background: #fff;
}
.sheet-table thead th {
    height: 26px;
    padding-right: 6px;
    text-align: right;
}
.sheet-table td {
    padding-left: 3px;
}
.sheet-table .sub {
    padding-left: 30px;
}

/* drawing */
.stage {
    display: flex;
    flex-direction: column;
    flex: 1;
    min-width: 0;
}
.canvas {
    position: relative;
    flex: 1;
    min-height: 0;
    overflow: hidden;
    background: #000;
}
.drawing {
    display: block;
    width: 100%;
    height: 100%;
}
.cad-text {
    font-family: "Liberation Mono", monospace;
    font-size: 7px;
    fill: #fff;
}
.note {
    fill: #505020;
}
.lime {
    fill: #e8e820;
}
.gold {
    fill: #b0a000;
}
.dim, .gray {
    fill: #585858;
}
.green {
    fill: #109018;
}
.violet {
    fill: #903870;
}
.big, .mid {
    font-family: "Liberation Sans", sans-serif;
    font-size: 15px;
}
.mid {
    font-size: 14px;
}
.cjk {
    font-family: "Noto Sans CJK SC", sans-serif;
    font-size: 13px;
    fill: #505070;
}
.height-input {
    position: absolute;
    left: 741px;
    top: 423px;
    width: 29px;
    height: 16px;
    border: 1px solid #fff;
    border-bottom-width: 2px;
    background: #316ac5;
    color: #fff;
}

/* snap bar */
.snap-bar {
    height: 29px;
}
.field {
    padding: 0 4px 0 5px;
}
.off, .unit {
    color: #aca899;
}
.field.off {
    padding: 0 1px 0 0;
}
.unit {
    width: 20px;
    font-size: 11px;
}
.spin {
    display: flex;
    align-items: center;
    width: 58px;
    height: 20px;
    border: 1px solid #c0bcac;
    color: #aca899;
}
.spin.long {
    width: 68px;
}
.spin input {
    flex: 1;
    min-width: 0;
    padding-right: 10px;
    text-align: right;
}
.spin svg {
    width: 8px;
    height: 16px;
    margin-right: 3px;
    fill: #aca899;
}
input.off {
    width: 11px;
    height: 11px;
    border-color: #c0bcac;
}

/* rebar table */
.rebar {
    display: flex;
    height: 102px;
    flex: none;
}
.rebar-side {
    width: 12px;
    flex: none;
    padding: 2px 0 0 1px;
}
.shut {
    display: block;
    width: 9px;
    height: 9px;
    background: #c03828;
    border-radius: 1px;
}
.shut svg {
    display: block;
    width: 9px;
    height: 9px;
    stroke: #fff;
}
.rebar-main {
    display: flex;
    flex-direction: column;
    flex: 1;
    min-width: 0;
}
.rebar-main .wide {
    flex: none;
    height: 28px;
    padding-left: 3px;
}
.total {
    padding-left: 5px;
}
.rebar-scroll {
    flex: 1;
    border: 1px solid #7f9db9;
    border-width: 1px 0 0 1px;
    background: #fff;
    overflow: hidden;
}
.rebar-table th, .rebar-table td {
    height: 20px;
    padding: 0;
    border: 1px solid #c0bcac;
    border-top: 0;
    overflow: hidden;
    text-align: center;
}
.rebar-table thead th {
    height: 21px;
    background: linear-gradient(#fff, #ece9d8);
}
.rebar-table thead .hot {
    background: linear-gradient(#f8d8a0, #f4bc60);
}
.rebar-table thead th:last-child {
    padding-left: 11px;
    text-align: left;
}
.rebar-table .cell {
    border-left: 1px solid #000;
    background: #dfe8f4;
}
.r33 { width: 33px; }
.r35 { width: 35px; }
.r38 { width: 38px; }
.r49 { width: 49px; }
.r57 { width: 57px; }
.r61 { width: 61px; }
.r73 { width: 73px; }
.r156 { width: 156px; }
.r166 { width: 166px; }
.r201 { width: 201px; }

/* overlays */
.callouts {
    position: absolute;
    left: 0;
    top: 0;
    width: 100%;
    height: 100%;
    pointer-events: none;
}
.ime {
    position: absolute;
    right: 0;
    bottom: 3px;
    display: flex;
    align-items: center;
}
.ime-logo {
    width: 28px;
    height: 28px;
    margin-right: -6px;
    z-index: 1;
}
.ime-bar {
    display: flex;
    align-items: center;
    gap: 6px;
    height: 25px;
    padding: 0 5px 0 12px;
    border: 1px solid #a8c0dc;
    border-right: 0;
    background: #fff;
    color: #1870c8;
    fill: #1870c8;
    font-size: 15px;
}
```
